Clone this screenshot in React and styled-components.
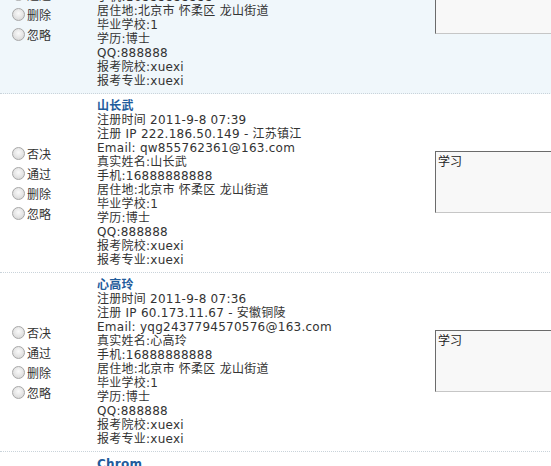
import React from 'react';
import styled, { createGlobalStyle } from 'styled-components';

const GlobalStyle = createGlobalStyle`
  html, body {
    margin: 0;
    padding: 0;
    background: #fff;
    overflow: hidden;
  }
  body {
    font-family: "DejaVu Sans", Verdana, "Noto Sans CJK SC", sans-serif;
    font-size: 12px;
    color: #333;
  }
`;

const members = [
  {
    name: '张晓明',
    time: '2011-9-8 07:42',
    ip: '218.75.23.101 - 北京',
    email: 'zxm_2011@163.com',
    remark: '',
    highlight: true,
  },
  {
    name: '山长武',
    time: '2011-9-8 07:39',
    ip: '222.186.50.149 - 江苏镇江',
    email: 'qw855762361@163.com',
    remark: '学习',
  },
  {
    name: '心高玲',
    time: '2011-9-8 07:36',
    ip: '60.173.11.67 - 安徽铜陵',
    email: 'yqg2437794570576@163.com',
    remark: '学习',
  },
  {
    name: 'Chrom',
    time: '2011-9-8 07:30',
    ip: '61.132.8.45 - 安徽合肥',
    email: 'chrom@163.com',
    remark: '学习',
  },
];

const actions = ['否决', '通过', '删除', '忽略'];

const List = styled.div`
  margin-top: -85px;
  width: 560px;
`;

const Row = styled.div`
  display: grid;
  grid-template-columns: 97px 338px 1fr;
  align-items: center;
  height: 179px;
  box-sizing: border-box;
  border-bottom: 1px dotted #c9d3da;
  background: ${(p) => (p.$highlight ? '#f0f7fb' : '#fff')};
`;

const Actions = styled.div`
  display: flex;
  flex-direction: column;
  gap: 6px;
  padding-left: 12px;
  padding-top: 1px;
`;

const Choice = styled.label`
  display: flex;
  align-items: center;
  gap: 2px;
  height: 14px;
  font-family: "Noto Sans CJK SC", sans-serif;
  font-size: 12px;
  color: #333;
`;

const Radio = styled.input.attrs({ type: 'radio' })`
  appearance: none;
  margin: 0;
  width: 13px;
  height: 13px;
  border-radius: 50%;
  border: 1px solid #a8a8a8;
  box-sizing: border-box;
  background: radial-gradient(circle at 50% 40%, #fafafa 0%, #e4e4e4 55%, #cfcfcf 100%);
`;

const Info = styled.div`
  display: flex;
  flex-direction: column;
  line-height: 14px;
  font-size: 12px;
  letter-spacing: 0.25px;
  color: #333;
  white-space: nowrap;
`;

const Name = styled.a`
  font-weight: bold;
  color: #1f5c9c;
  text-decoration: none;
  font-size: 12px;
`;

const Remark = styled.textarea`
  width: 150px;
  height: 62px;
  margin: 0;
  padding: 2px;
  box-sizing: border-box;
  resize: none;
  background: #f8f8f8;
  border-style: solid;
  border-width: 1px;
  border-color: #6b6b6b #cfcfcf #c6c6c6 #6b6b6b;
  font-family: "Noto Sans CJK SC", sans-serif;
  font-size: 12px;
  line-height: 14px;
  color: #222;
  outline: none;
`;

const Member = ({ m }) => (
  <Row $highlight={m.highlight}>
    <Actions>
      {actions.map((a) => (
        <Choice key={a}>
          <Radio name={m.name} />
          {a}
        </Choice>
      ))}
    </Actions>
    <Info>
      <Name href="#">{m.name}</Name>
      <span>注册时间 {m.time}</span>
      <span>注册 IP {m.ip}</span>
      <span>Email: {m.email}</span>
      <span>真实姓名:{m.name}</span>
      <span>手机:16888888888</span>
      <span>居住地:北京市 怀柔区 龙山街道</span>
      <span>毕业学校:1</span>
      <span>学历:博士</span>
      <span>QQ:888888</span>
      <span>报考院校:xuexi</span>
      <span>报考专业:xuexi</span>
    </Info>
    <div>
      <Remark defaultValue={m.remark} />
    </div>
  </Row>
);

export default function App() {
  return (
    <>
      <GlobalStyle />
      <List>
        {members.map((m) => (
          <Member key={m.name} m={m} />
        ))}
      </List>
    </>
  );
}
